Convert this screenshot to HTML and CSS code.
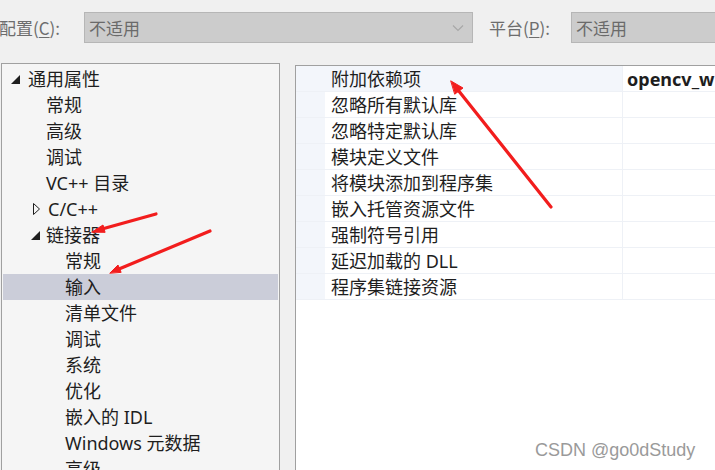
FILE: index.html
```html
<!DOCTYPE html>
<html lang="zh-CN">
<head>
<meta charset="utf-8">
<link rel="stylesheet" href="styles.css">
</head>
<body>
<div class="page">
  <header class="toolbar">
    <span class="lbl lbl-config">配置(<u>C</u>):</span>
    <div class="combo combo-config">
      <span class="combo-text">不适用</span>
      <svg class="chev" width="12" height="8" viewBox="0 0 12 8"><path d="M1 1.5 L6 6.5 L11 1.5" fill="none" stroke="#a8a8a8" stroke-width="1.2"/></svg>
    </div>
    <span class="lbl lbl-platform">平台(<u>P</u>):</span>
    <div class="combo combo-platform">
      <span class="combo-text">不适用</span>
    </div>
  </header>
  <main class="main">
    <nav class="tree">
      <div class="node l0"><svg class="tri" width="9" height="9" viewBox="0 0 9 9"><path d="M9 0 L9 9 L0 9 Z" fill="#1e1e1e"/></svg><span>通用属性</span></div>
      <div class="node l1"><span>常规</span></div>
      <div class="node l1"><span>高级</span></div>
      <div class="node l1"><span>调试</span></div>
      <div class="node l1"><span>VC++ 目录</span></div>
      <div class="node l1 has-tri"><svg class="tri tri-open" width="7" height="12" viewBox="0 0 7 12"><path d="M0.5 0.5 L6.5 6 L0.5 11.5 Z" fill="none" stroke="#1e1e1e" stroke-width="1"/></svg><span>C/C++</span></div>
      <div class="node l1 has-tri"><svg class="tri" width="9" height="9" viewBox="0 0 9 9"><path d="M9 0 L9 9 L0 9 Z" fill="#1e1e1e"/></svg><span>链接器</span></div>
      <div class="node l2"><span>常规</span></div>
      <div class="node l2 selected"><span>输入</span></div>
      <div class="node l2"><span>清单文件</span></div>
      <div class="node l2"><span>调试</span></div>
      <div class="node l2"><span>系统</span></div>
      <div class="node l2"><span>优化</span></div>
      <div class="node l2"><span>嵌入的 IDL</span></div>
      <div class="node l2"><span>Windows 元数据</span></div>
      <div class="node l2"><span>高级</span></div>
    </nav>
    <section class="grid">
      <div class="row first"><div class="gut"></div><div class="name">附加依赖项</div><div class="val bold">opencv_w</div></div>
      <div class="row"><div class="gut"></div><div class="name">忽略所有默认库</div><div class="val"></div></div>
      <div class="row"><div class="gut"></div><div class="name">忽略特定默认库</div><div class="val"></div></div>
      <div class="row"><div class="gut"></div><div class="name">模块定义文件</div><div class="val"></div></div>
      <div class="row"><div class="gut"></div><div class="name">将模块添加到程序集</div><div class="val"></div></div>
      <div class="row"><div class="gut"></div><div class="name">嵌入托管资源文件</div><div class="val"></div></div>
      <div class="row"><div class="gut"></div><div class="name">强制符号引用</div><div class="val"></div></div>
      <div class="row"><div class="gut"></div><div class="name">延迟加载的 DLL</div><div class="val"></div></div>
      <div class="row"><div class="gut"></div><div class="name">程序集链接资源</div><div class="val"></div></div>
    </section>
  </main>
  <svg class="arrows" width="715" height="470" viewBox="0 0 715 470">
    <g stroke="#f21d1d" stroke-width="3.2" stroke-linecap="round" fill="#f21d1d">
      <line x1="551" y1="207" x2="458" y2="90"/>
      <path d="M451 81 L463 88 L455 94 Z" stroke-width="1"/>
      <line x1="156" y1="214" x2="102" y2="229"/>
      <path d="M92 232 L103 225 L105 232 Z" stroke-width="1"/>
      <line x1="210" y1="231" x2="119" y2="269"/>
      <path d="M110 273 L118 265 L121 272 Z" stroke-width="1"/>
    </g>
  </svg>
  <div class="watermark">CSDN @go0dStudy</div>
</div>
</body>
</html>
```

FILE: styles.css
```css
html, body {
  margin: 0;
  padding: 0;
}
body {
  width: 715px;
  height: 470px;
  overflow: hidden;
  background: #f0f0f0;
  font-family: "Noto Sans", "Noto Sans CJK SC", sans-serif;
  color: #1e1e1e;
}
.page {
  position: relative;
  width: 715px;
  height: 470px;
  overflow: hidden;
}
.toolbar {
  display: flex;
  align-items: center;
  height: 31px;
  padding-top: 12px;
  padding-bottom: 20px;
  white-space: nowrap;
}
.lbl {
  font-family: "Noto Sans CJK SC", sans-serif;
  font-size: 17px;
  color: #6d6d6d;
  flex-shrink: 0;
  box-sizing: border-box;
}
.lbl u { text-decoration-thickness: 1px; text-underline-offset: 2px; }
.lbl-config { margin-left: -1px; flex: 0 0 85px; }
.lbl-platform { margin-left: 16px; flex: 0 0 82px; }
.combo {
  box-sizing: border-box;
  height: 31px;
  background: #cccccc;
  border: 1px solid #b6b6b6;
  display: flex;
  align-items: center;
  padding-left: 4px;
  flex-shrink: 0;
}
.combo-config { flex: 0 0 389px; justify-content: space-between; padding-right: 8px; }
.combo-platform { flex: 0 0 160px; }
.combo-text {
  font-family: "Noto Sans CJK SC", sans-serif;
  font-size: 17px;
  color: #6a6a6a;
}
.chev { display: block; }
.main {
  display: flex;
  align-items: flex-start;
}
.tree {
  box-sizing: border-box;
  flex: 0 0 279px;
  height: 420px;
  margin-left: 1px;
  border: 1px solid #a0a0a0;
  background: #f5f5f5;
  padding: 2px 1px 0 1px;
}
.node {
  height: 26px;
  display: flex;
  align-items: center;
  font-size: 18px;
  white-space: nowrap;
  position: relative;
  line-height: 26px;
}
.node span { font-family: "Noto Sans", "Noto Sans CJK SC", sans-serif; }
.node.l0 { padding-left: 8px; }
.node.l0 .tri { margin-right: 8px; margin-top: 1px; }
.node.l1 { padding-left: 43px; }
.node.l1.has-tri { padding-left: 28px; }
.node.l1.has-tri .tri { margin-right: 6px; }
.node.l1.has-tri .tri-open { margin-right: 8px; margin-left: 2px; }
.node.l2 { padding-left: 62px; }
.node.selected { background: #cbcdd9; }
.tri { display: block; flex-shrink: 0; }
.grid {
  box-sizing: border-box;
  flex: 1 1 auto;
  min-width: 0;
  height: 420px;
  margin-left: 15px;
  margin-top: 2px;
  border-left: 1px solid #a0a0a0;
  border-top: 1px solid #a0a0a0;
  background: #ffffff;
}
.row {
  display: flex;
  height: 26px;
  box-sizing: border-box;
  border-bottom: 1px solid #eef1f6;
}
.row .gut {
  flex: 0 0 29px;
  background: #f3f6fb;
}
.row .name {
  flex: 0 0 298px;
  box-sizing: border-box;
  padding-left: 6px;
  padding-top: 1px;
  border-right: 1px solid #eef1f6;
  font-size: 18px;
  line-height: 25px;
  white-space: nowrap;
}
.row.first .name { background: #f3f6fb; }
.row .val {
  flex: 1 1 auto;
  min-width: 0;
  padding-left: 4px;
  padding-top: 1px;
  font-size: 18px;
  line-height: 25px;
  white-space: nowrap;
  overflow: hidden;
}
.row .val.bold { font-weight: 700; }
.arrows {
  position: absolute;
  left: 0;
  top: 0;
  pointer-events: none;
}
.watermark {
  position: absolute;
  left: 535px;
  top: 440px;
  font-family: "Liberation Sans", sans-serif;
  font-size: 18px;
  color: #9a9a9a;
  white-space: nowrap;
}
```
